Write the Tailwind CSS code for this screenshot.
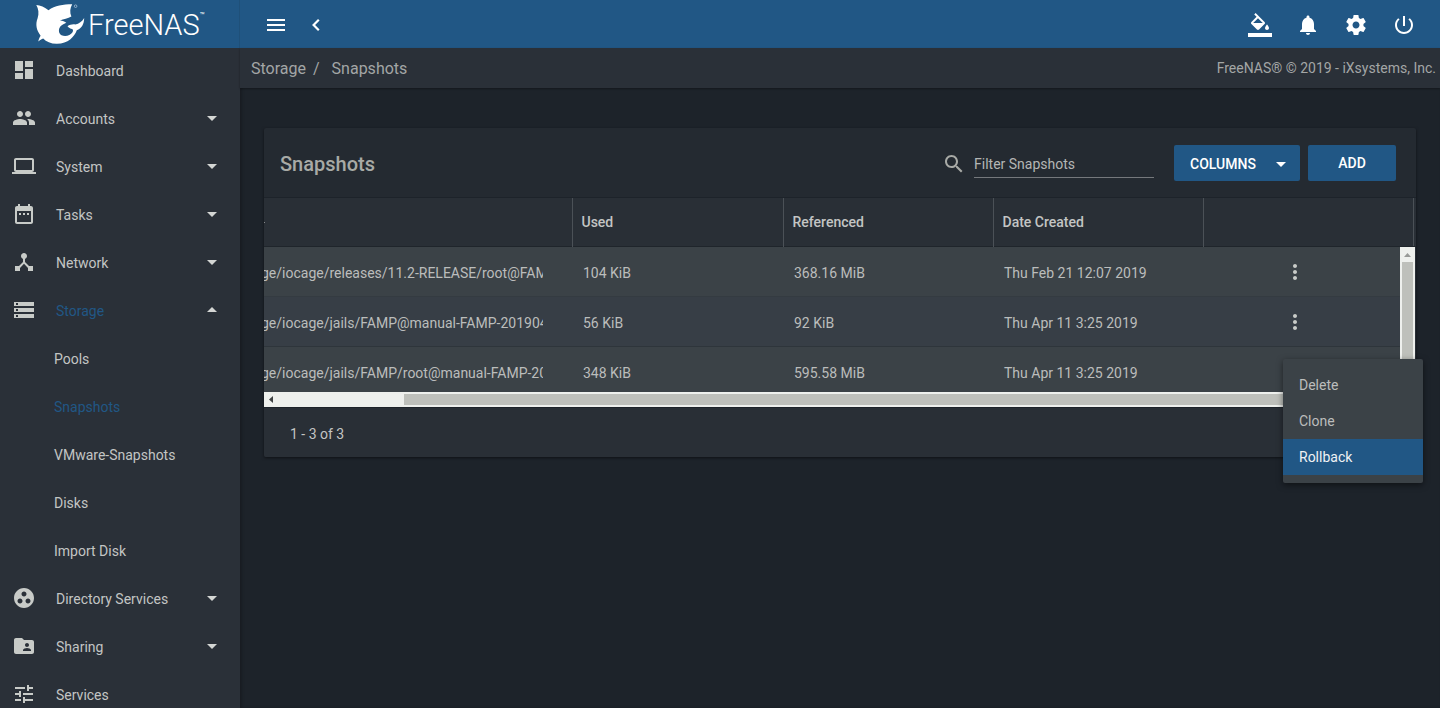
<!DOCTYPE html>
<html lang="en">
<head>
<meta charset="utf-8">
<title>FreeNAS - Snapshots</title>
<script src="https://cdn.jsdelivr.net/npm/@tailwindcss/browser@4"></script>
</head>
<body class="h-screen overflow-hidden flex flex-col bg-[#1d232a] font-[Roboto,sans-serif] text-sm text-[#c3c5c4]">
<svg class="hidden">
  <symbol id="down" viewBox="0 0 24 24"><path d="M7 10l5 5 5-5z"/></symbol>
  <symbol id="up" viewBox="0 0 24 24"><path d="M7 14l5-5 5 5z"/></symbol>
  <symbol id="more" viewBox="0 0 24 24"><path d="M12 8c1.100 0 2-.9 2-2s-.9-2-2-2-2 .9-2 2 .9 2 2 2zm0 2c-1.100 0-2 .9-2 2s.9 2 2 2 2-.9 2-2-.9-2-2-2zm0 6c-1.100 0-2 .9-2 2s.9 2 2 2 2-.9 2-2-.9-2-2-2z"/></symbol>
</svg>

<header class="h-12 shrink-0 flex items-center bg-[#215785] text-white">
  <a href="#" aria-label="FreeNAS" class="w-60 h-12 pl-[34px] flex items-center border-r border-[#1f5079]">
    <svg class="w-[54px] h-12 shrink-0" viewBox="0 0 54 48" fill="#fff">
      <path d="M2.300 5C6 5.300 11 7.200 14.500 10.200C21 5.500 29 4.500 38.200 4.300C36 8 35.600 12.500 37.400 16.500C34 18.600 29.500 19.200 26 20.400C28.500 20.800 31 21.300 32.300 22.800C30.500 24 28.200 24.300 26.300 26.600C24.200 29.500 24.500 33.500 27.500 35.300C31.500 37 36.500 35.500 38.500 32.200C39.300 30.500 39.100 29.800 38.300 28.900C36.300 28.600 34.600 27.900 33.500 26.200C36 24.700 38.700 23.900 41.300 24.500C45 23.700 48 21.500 50.200 18C50 24.500 47.500 28.500 42.800 30.200C40.500 36.500 34 43.700 23 43.800C17 43.900 12.300 41.800 9.200 38.500C7.500 38.900 6 40.200 4.300 41.600C4.600 39.500 5.600 37.400 6.600 35.700C2.500 30.300 1.200 24.500 3.600 18.300C5.200 13.500 4.500 9 2.300 5Z"/>
      <circle cx="41.600" cy="6.200" r="1.300" fill="none" stroke="#a8c2d8" stroke-width=".8"/>
    </svg>
    <span class="text-[29px] leading-[48px] pt-0.5 font-light">FreeNAS</span><span class="self-start pt-3 text-[8px] leading-[8px]">™</span>
  </a>
  <button aria-label="Menu" class="ml-6 pt-0.5"><svg class="size-6" viewBox="0 0 24 24" fill="currentColor"><path d="M3 18h18v-2H3v2zm0-5h18v-2H3v2zm0-7v2h18V6H3z"/></svg></button>
  <button aria-label="Collapse" class="ml-4 pt-0.5"><svg class="size-6" viewBox="0 0 24 24" fill="none" stroke="currentColor" stroke-width="2.200"><path d="M14.800 6.800L9.600 12l5.200 5.200"/></svg></button>
  <div class="ml-auto pr-6 pt-0.5 flex gap-6">
    <button aria-label="Themes"><svg class="size-6" viewBox="0 0 24 24" fill="currentColor"><path d="M16.560 8.940L7.620 0 6.210 1.410l2.380 2.380-5.150 5.150c-.59.59-.59 1.540 0 2.120l5.500 5.500c.29.29.68.44 1.060.44s.77-.15 1.060-.44l5.500-5.500c.59-.58.59-1.530 0-2.120zM5.210 10L10 5.210 14.790 10H5.210zM19 11.500s-2 2.170-2 3.500c0 1.100.9 2 2 2s2-.9 2-2c0-1.330-2-3.500-2-3.500zM0 20h24v4H0z"/></svg></button>
    <button aria-label="Notifications"><svg class="size-6" viewBox="0 0 24 24" fill="currentColor"><path d="M12 22c1.100 0 2-.9 2-2h-4c0 1.100.89 2 2 2zm6-6v-5c0-3.070-1.640-5.640-4.500-6.320V4c0-.83-.67-1.500-1.500-1.500s-1.500.67-1.500 1.500v.68C7.630 5.360 6 7.920 6 11v5l-2 2v1h16v-1l-2-2z"/></svg></button>
    <button aria-label="Settings"><svg class="size-6" viewBox="0 0 24 24" fill="currentColor"><path d="M19.430 12.980c.04-.32.07-.64.07-.98s-.03-.66-.07-.98l2.110-1.650c.19-.15.24-.42.12-.64l-2-3.460c-.12-.22-.39-.3-.61-.22l-2.490 1c-.52-.4-1.080-.73-1.690-.98l-.38-2.650C14.460 2.180 14.250 2 14 2h-4c-.25 0-.46.18-.49.42l-.38 2.650c-.61.25-1.170.59-1.690.98l-2.490-1c-.23-.09-.49 0-.61.22l-2 3.460c-.13.22-.07.49.12.64l2.110 1.650c-.04.32-.07.65-.07.98s.03.66.07.98l-2.110 1.650c-.19.15-.24.42-.12.64l2 3.460c.12.22.39.3.61.22l2.490-1c.52.4 1.080.73 1.690.98l.38 2.650c.03.24.24.42.49.42h4c.25 0 .46-.18.49-.42l.38-2.650c.61-.25 1.170-.59 1.690-.98l2.490 1c.23.09.49 0 .61-.22l2-3.460c.12-.22.07-.49-.12-.64l-2.110-1.650zM12 15.500c-1.930 0-3.500-1.570-3.500-3.500s1.570-3.500 3.500-3.500 3.500 1.570 3.500 3.500-1.570 3.500-3.500 3.500z"/></svg></button>
    <button aria-label="Power"><svg class="size-6" viewBox="0 0 24 24" fill="currentColor"><path d="M13 3h-2v10h2V3zm4.830 2.170l-1.420 1.420C17.990 7.860 19 9.810 19 12c0 3.870-3.130 7-7 7s-7-3.130-7-7c0-2.190 1.010-4.140 2.580-5.420L6.170 5.170C4.230 6.820 3 9.260 3 12c0 4.970 4.030 9 9 9s9-4.030 9-9c0-2.740-1.230-5.180-3.170-6.830z"/></svg></button>
  </div>
</header>

<div class="flex flex-1 min-h-0">
  <nav aria-label="Main" class="w-60 shrink-0 overflow-hidden bg-[#2a3038] *:h-12 *:flex *:items-center *:w-full *:pb-0.5">
    <a href="#" class="pl-3"><svg class="size-6 mr-5 -mt-0.5" viewBox="0 0 24 24" fill="#c8cbc8"><path d="M3 13h8V3H3v10zm0 8h8v-6H3v6zm10 0h8V11h-8v10zm0-18v6h8V3h-8z"/></svg>Dashboard</a>
    <a href="#" class="pl-3"><svg class="size-6 mr-5 -mt-0.5" viewBox="0 0 24 24" fill="#c8cbc8"><path d="M16 11c1.660 0 2.990-1.340 2.990-3S17.660 5 16 5c-1.660 0-3 1.340-3 3s1.340 3 3 3zm-8 0c1.660 0 2.990-1.340 2.990-3S9.660 5 8 5C6.340 5 5 6.340 5 8s1.340 3 3 3zm0 2c-2.330 0-7 1.170-7 3.500V19h14v-2.500c0-2.330-4.670-3.500-7-3.500zm8 0c-.29 0-.62.02-.97.05 1.160.84 1.970 1.970 1.970 3.450V19h6v-2.500c0-2.330-4.670-3.500-7-3.500z"/></svg>Accounts<svg class="size-6 ml-auto mr-4 -mt-0.5" fill="#d4d6d4"><use href="#down"/></svg></a>
    <a href="#" class="pl-3"><svg class="size-6 mr-5 -mt-0.5" viewBox="0 0 24 24" fill="#c8cbc8"><path d="M20 18c1.100 0 1.990-.9 1.990-2L22 6c0-1.100-.9-2-2-2H4c-1.100 0-2 .9-2 2v10c0 1.100.9 2 2 2H0v2h24v-2h-4zM4 6h16v10H4V6z"/></svg>System<svg class="size-6 ml-auto mr-4 -mt-0.5" fill="#d4d6d4"><use href="#down"/></svg></a>
    <a href="#" class="pl-3"><svg class="size-6 mr-5 -mt-0.5" viewBox="0 0 24 24" fill="#c8cbc8"><path d="M9 11H7v2h2v-2zm4 0h-2v2h2v-2zm4 0h-2v2h2v-2zm2-7h-1V2h-2v2H8V2H6v2H5c-1.110 0-1.990.9-1.990 2L3 20c0 1.100.89 2 2 2h14c1.100 0 2-.9 2-2V6c0-1.100-.9-2-2-2zm0 16H5V9h14v11z"/></svg>Tasks<svg class="size-6 ml-auto mr-4 -mt-0.5" fill="#d4d6d4"><use href="#down"/></svg></a>
    <a href="#" class="pl-3"><svg class="size-6 mr-5 -mt-0.5" viewBox="0 0 24 24" fill="#c8cbc8"><path d="M17 16l-4-4V8.820C14.160 8.400 15 7.300 15 6c0-1.660-1.340-3-3-3S9 4.340 9 6c0 1.300.84 2.400 2 2.820V12l-4 4H3v5h5v-3.050l4-4.200 4 4.200V21h5v-5h-4z"/></svg>Network<svg class="size-6 ml-auto mr-4 -mt-0.5" fill="#d4d6d4"><use href="#down"/></svg></a>
    <a href="#" class="pl-3 text-[#215785]"><svg class="size-6 mr-5 -mt-0.5" viewBox="0 0 24 24" fill="#c8cbc8"><path d="M2 20h20v-4H2v4zm2-3h2v2H4v-2zM2 4v4h20V4H2zm4 3H4V5h2v2zm-4 7h20v-4H2v4zm2-3h2v2H4v-2z"/></svg>Storage<svg class="size-6 ml-auto mr-4 -mt-0.5" fill="#d4d6d4"><use href="#up"/></svg></a>
    <a href="#" class="pl-[54px]">Pools</a>
    <a href="#" class="pl-[54px] text-[#215785]">Snapshots</a>
    <a href="#" class="pl-[54px]">VMware-Snapshots</a>
    <a href="#" class="pl-[54px]">Disks</a>
    <a href="#" class="pl-[54px]">Import Disk</a>
    <a href="#" class="pl-3"><svg class="size-6 mr-5 -mt-0.5" viewBox="0 0 24 24" fill="#c8cbc8"><path d="M12 2C6.480 2 2 6.480 2 12s4.480 10 10 10 10-4.480 10-10S17.520 2 12 2zM8 17.500c-1.380 0-2.500-1.120-2.500-2.500s1.120-2.500 2.500-2.500 2.500 1.120 2.500 2.500-1.120 2.500-2.500 2.500zM9.500 8c0-1.380 1.120-2.500 2.500-2.500s2.500 1.120 2.500 2.500-1.120 2.500-2.500 2.500S9.500 9.380 9.500 8zm6.500 9.500c-1.380 0-2.500-1.120-2.500-2.500s1.120-2.500 2.500-2.500 2.500 1.120 2.500 2.500-1.120 2.500-2.500 2.500z"/></svg>Directory Services<svg class="size-6 ml-auto mr-4 -mt-0.5" fill="#d4d6d4"><use href="#down"/></svg></a>
    <a href="#" class="pl-3"><svg class="size-6 mr-5 -mt-0.5" viewBox="0 0 24 24" fill="#c8cbc8"><path d="M20 6h-8l-2-2H4c-1.100 0-1.990.9-1.990 2L2 18c0 1.100.9 2 2 2h16c1.100 0 2-.9 2-2V8c0-1.100-.9-2-2-2zm-5 3c1.100 0 2 .9 2 2s-.9 2-2 2-2-.9-2-2 .9-2 2-2zm4 8h-8v-1c0-1.330 2.670-2 4-2s4 .67 4 2v1z"/></svg>Sharing<svg class="size-6 ml-auto mr-4 -mt-0.5" fill="#d4d6d4"><use href="#down"/></svg></a>
    <a href="#" class="pl-3"><svg class="size-6 mr-5 -mt-0.5" viewBox="0 0 24 24" fill="#c8cbc8"><path d="M3 17v2h6v-2H3zM3 5v2h10V5H3zm10 16v-2h8v-2h-8v-2h-2v6h2zM7 9v2H3v2h4v2h2V9H7zm14 4v-2H11v2h10zm-6-4h2V7h4V5h-4V3h-2v6z"/></svg>Services</a>
  </nav>

  <main class="flex-1 min-w-0 shadow-[inset_2px_0_3px_rgba(0,0,0,0.2)]">
    <div class="h-10 pl-[11px] pr-1 flex items-center bg-[#2a3038] text-[#a3a6a6] shadow-[0_1px_2px_rgba(0,0,0,0.35)]">
      <div class="pt-0.5 text-base"><a href="#">Storage</a><span class="pl-[7px] pr-3">/</span><a href="#">Snapshots</a></div>
      <span class="ml-auto">FreeNAS® © 2019 - iXsystems, Inc.</span>
    </div>

    <section class="relative mx-6 mt-10 rounded-xs bg-[#242a31] shadow-[0_1px_3px_rgba(0,0,0,0.5)]">
      <div class="h-[69px] pl-4 pr-5 pt-[3px] flex items-center">
        <h1 class="text-xl font-medium text-[#a8aaa6]">Snapshots</h1>
        <label for="filter" class="ml-auto mr-2" aria-label="Filter Snapshots"><svg class="size-6" viewBox="0 0 24 24" fill="#a8aaa6"><path d="M15.500 14h-.79l-.28-.27C15.410 12.590 16 11.110 16 9.500 16 5.910 13.090 3 9.500 3S3 5.910 3 9.500 5.910 16 9.500 16c1.610 0 3.090-.59 4.230-1.570l.27.28v.79l5 4.990L20.490 19l-4.990-5zm-6 0C7.010 14 5 11.990 5 9.500S7.010 5 9.500 5 14 7.010 14 9.500 11.990 14 9.500 14z"/></svg></label>
        <input id="filter" type="text" placeholder="Filter Snapshots" class="w-45 h-7 mr-5 border-b border-[#75787c] bg-transparent outline-none placeholder:text-[#b4b6b5]">
        <div class="flex gap-2 pb-0.5">
          <button class="h-9 w-[126px] pl-4 pt-px flex items-center rounded-xs bg-[#215785] text-white font-medium">COLUMNS<svg class="size-6 ml-auto mr-[7px]" fill="#fff"><use href="#down"/></svg></button>
          <button class="h-9 w-[88px] rounded-xs bg-[#215785] text-white font-medium">ADD</button>
        </div>
      </div>

      <div class="relative h-[195px] overflow-hidden bg-[#292f36] border-t border-[#1d232a]">
        <table class="w-full table-fixed border-collapse text-left whitespace-nowrap">
          <colgroup><col><col class="w-[211px]"><col class="w-[210px]"><col class="w-[210px]"><col class="w-[213px]"></colgroup>
          <thead class="text-[#c3c5c4]">
            <tr class="h-12">
              <th class="p-0 border-r border-[#4b5157]"><div class="size-px bg-[#85888a]"></div></th>
              <th class="p-0 pl-[9px] border-r border-[#4b5157] font-medium">Used</th>
              <th class="p-0 pl-[9px] border-r border-[#4b5157] font-medium">Referenced</th>
              <th class="p-0 pl-[9px] border-r border-[#4b5157] font-medium">Date Created</th>
              <th class="p-0 pr-0.5"><div class="h-12 border-r border-[#4b5157]"></div></th>
            </tr>
          </thead>
          <tbody class="text-[#bbbdbc]">
            <tr class="h-[50px] bg-[#3b4247] border-t border-[#1f252b]">
              <td class="p-0 pt-0.5 pr-[29px]"><div class="overflow-hidden"><div class="-ml-[3px]">ge/iocage/releases/11.2-RELEASE/root@FAM</div></div></td>
              <td class="p-0 pt-0.5 pl-[11px]">104 KiB</td><td class="p-0 pt-0.5 pl-[11px]">368.16 MiB</td><td class="p-0 pt-0.5 pl-[11px]">Thu Feb 21 12:07 2019</td>
              <td class="p-0 pl-20"><button aria-label="Options" class="block"><svg class="size-6" fill="#c8cbc8"><use href="#more"/></svg></button></td>
            </tr>
            <tr class="h-[50px] bg-[#373e46] border-t border-[#343b41]">
              <td class="p-0 pt-0.5 pr-[29px]"><div class="overflow-hidden"><div class="-ml-[3px]">ge/iocage/jails/FAMP@manual-FAMP-201904</div></div></td>
              <td class="p-0 pt-0.5 pl-[11px]">56 KiB</td><td class="p-0 pt-0.5 pl-[11px]">92 KiB</td><td class="p-0 pt-0.5 pl-[11px]">Thu Apr 11 3:25 2019</td>
              <td class="p-0 pl-20"><button aria-label="Options" class="block"><svg class="size-6" fill="#c8cbc8"><use href="#more"/></svg></button></td>
            </tr>
            <tr class="h-[50px] bg-[#3b4247] border-t border-[#2e353b]">
              <td class="p-0 pt-0.5 pr-[29px]"><div class="overflow-hidden"><div class="-ml-[3px]">ge/iocage/jails/FAMP/root@manual-FAMP-20</div></div></td>
              <td class="p-0 pt-0.5 pl-[11px]">348 KiB</td><td class="p-0 pt-0.5 pl-[11px]">595.58 MiB</td><td class="p-0 pt-0.5 pl-[11px]">Thu Apr 11 3:25 2019</td>
              <td class="p-0"></td>
            </tr>
          </tbody>
        </table>
        <!-- vertical scrollbar over the rows -->
        <div class="absolute right-px top-[49px] bottom-0 w-[15px] px-0.5 bg-[#eef0ed]">
          <svg class="w-[11px] h-[15px]" viewBox="0 0 11 15"><path d="M2 10l3.500-4L9 10z" fill="#989a98"/></svg>
          <div class="h-full bg-[#bec0bb]"></div>
        </div>
        <div class="absolute right-0 top-[49px] bottom-0 w-px bg-[#292f36]"></div>
      </div>
      <!-- horizontal scrollbar -->
      <div class="h-[15px] py-0.5 flex items-center bg-[#eef0ed]">
        <svg class="w-[15px] h-[11px]" viewBox="0 0 15 11"><path d="M9 2L5 5.500 9 9z" fill="#3f4243"/></svg>
        <div class="ml-[125px] mr-4 flex-1 h-[11px] bg-[#bec0bb]"></div>
      </div>
      <div class="h-[50px] pl-[26px] pt-0.5 flex items-center border-t border-[#1d232a] bg-[#292f36] rounded-b-xs">1 - 3 of 3</div>

      <div role="menu" class="absolute top-[231px] -right-[7px] w-35 py-2 rounded-xs bg-[#3b4247] text-[#bbbdbc] shadow-[0_2px_6px_rgba(0,0,0,0.5)]">
        <button role="menuitem" class="block w-full h-9 pl-4 text-left">Delete</button>
        <button role="menuitem" class="block w-full h-9 pl-4 text-left">Clone</button>
        <button role="menuitem" class="block w-full h-9 pl-4 text-left bg-[#215785] text-[#f0f2f4]">Rollback</button>
      </div>
    </section>
  </main>
</div>
</body>
</html>
